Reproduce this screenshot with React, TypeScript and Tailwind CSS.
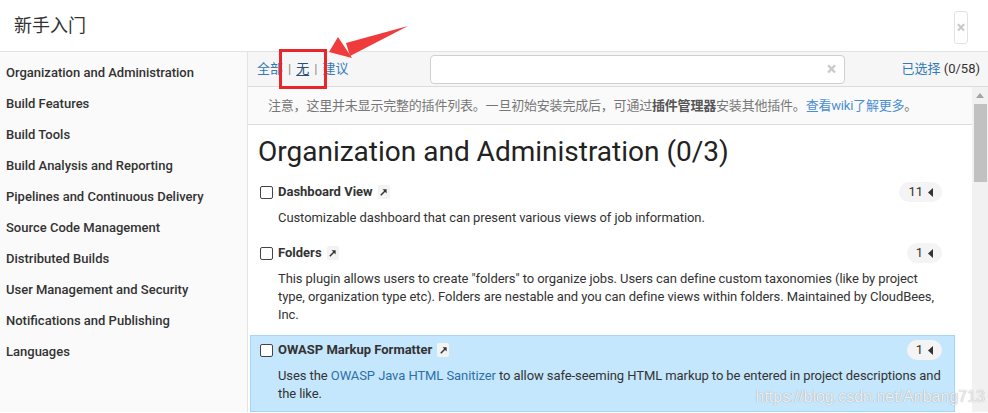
const categories = [
  "Organization and Administration",
  "Build Features",
  "Build Tools",
  "Build Analysis and Reporting",
  "Pipelines and Continuous Delivery",
  "Source Code Management",
  "Distributed Builds",
  "User Management and Security",
  "Notifications and Publishing",
  "Languages",
];

function ExtLink() {
  return (
    <span className="ml-[5px] inline-flex h-[14px] w-[12px] items-center justify-center rounded-[2px] bg-[#f3f3f3]">
      <svg width="9" height="9" viewBox="0 0 10 10">
        <path d="M2 8 L7.5 2.5" stroke="#333" strokeWidth="1.6" />
        <path d="M4 1.5 H8.5 V6 Z" fill="#333" />
      </svg>
    </span>
  );
}

function Badge({ n }: { n: string }) {
  return (
    <span className="flex h-[20px] items-center gap-[5px] rounded-full bg-[#f4f4f4] px-[9px] text-[13px] text-[#333]">
      {n}
      <svg width="5" height="9" viewBox="0 0 5 9">
        <path d="M5 0 V9 L0 4.5 Z" fill="#333" />
      </svg>
    </span>
  );
}

function Plugin({
  name,
  count,
  active,
  children,
}: {
  name: string;
  count: string;
  active?: boolean;
  children: React.ReactNode;
}) {
  return (
    <div
      className={
        "mt-[2px] border pt-[5px] pb-[8px] pl-[9px] pr-[12px] " +
        (active ? "border-[#a3d6f7] bg-[#c5e7fd]" : "border-transparent")
      }
    >
      <div className="flex h-[18px] items-center">
        <span className="h-[13px] w-[13px] rounded-[2px] border border-[#444] bg-white" />
        <span className="ml-[5px] text-[13px] font-bold text-[#333]">{name}</span>
        <ExtLink />
        <span className="ml-auto">
          <Badge n={count} />
        </span>
      </div>
      <div className="mt-[8px] -mr-[8px] pl-[18px] text-[13px] leading-[18px] tracking-[-0.08px] text-[#333]">{children}</div>
    </div>
  );
}

export default function App() {
  return (
    <div className="relative h-[413px] w-[988px] overflow-hidden bg-white font-['Roboto','Noto_Sans_CJK_SC',sans-serif] text-[#333]">
      <div className="flex h-[52px] items-center justify-between border-b border-[#e3e3e3] pl-[14px] pr-[20px]">
        <span className="text-[18px] text-[#333]">新手入门</span>
        <span className="mt-[4px] flex h-[33px] w-[14px] items-center justify-center rounded-[3px] border border-[#e2e2e2] text-[16px] font-bold text-[#c8c8c8]">
          ×
        </span>
      </div>

      <div className="flex h-[360px]">
        <div className="w-[248px] shrink-0 border-r border-[#e3e3e3] bg-[#fafafa] pt-[5px]">
          {categories.map((c) => (
            <div key={c} className="flex h-[31px] items-center pl-[6px] text-[13px] font-medium text-[#333]">
              {c}
            </div>
          ))}
        </div>

        <div className="flex min-w-0 flex-1 flex-col">
          <div className="flex h-[35px] shrink-0 items-center border-b border-[#dcdcdc] bg-[#f6f6f6] pl-[9px] pr-[8px] text-[13px]">
            <span className="text-[#337ab7]">全部</span>
            <span className="mx-[5px] text-[#888]">|</span>
            <span className="text-[#23527c] underline underline-offset-2">无</span>
            <span className="mx-[5px] text-[#888]">|</span>
            <span className="text-[#337ab7]">建议</span>
            <div className="ml-[82px] flex h-[29px] w-[415px] items-center justify-end rounded-[4px] border border-[#d0d0d0] bg-white pr-[8px]">
              <span className="text-[18px] font-bold leading-none text-[#c9c9c9]">×</span>
            </div>
            <span className="ml-auto text-[#337ab7]">
              已选择 <span className="text-[#333]">(0/58)</span>
            </span>
          </div>

          <div className="flex min-h-0 flex-1">
            <div className="min-w-0 flex-1 overflow-hidden">
              <div className="flex h-[38px] items-center border-b border-[#dcdcdc] bg-[#fafafa] pl-[20px] text-[13px] tracking-[-0.2px] text-[#777]">
                注意，这里并未显示完整的插件列表。一旦初始安装完成后，可通过
                <span className="font-bold text-[#555]">插件管理器</span>
                安装其他插件。
                <span className="text-[#4a8fd0]">查看wiki了解更多</span>。
              </div>
              <h1 className="mt-[12px] h-[30px] pl-[10px] text-[28px] leading-[30px] font-normal text-[#222]">
                Organization and Administration (0/3)
              </h1>
              <div className="mt-[10px] pl-[2px] pr-[17px]">
                <Plugin name="Dashboard View" count="11">
                  Customizable dashboard that can present various views of job information.
                </Plugin>
                <Plugin name="Folders" count="1">
                  This plugin allows users to create "folders" to organize jobs. Users can define custom taxonomies (like by project
                  <br />
                  type, organization type etc). Folders are nestable and you can define views within folders. Maintained by CloudBees,
                  <br />
                  Inc.
                </Plugin>
                <Plugin name="OWASP Markup Formatter" count="1" active>
                  Uses the <span className="text-[#2f6fa8]">OWASP Java HTML Sanitizer</span> to allow safe-seeming HTML markup to be
                  entered in project descriptions and
                  <br />
                  the like.
                </Plugin>
              </div>
            </div>
            <div className="flex w-[16px] shrink-0 flex-col items-center bg-[#f1f1f1]">
              <svg className="mt-[6px]" width="8" height="5" viewBox="0 0 8 5">
                <path d="M0 5 L4 0 L8 5 Z" fill="#a3a3a3" />
              </svg>
              <div className="mt-[6px] h-[78px] w-[13px] bg-[#c1c1c1]" />
            </div>
          </div>
        </div>
      </div>

      <div className="absolute left-[279px] top-[49px] h-[40px] w-[48px] border-[3px] border-[#e8262b]" />
      <svg className="absolute left-0 top-0" width="988" height="413" viewBox="0 0 988 413">
        <path d="M408 26 L346 43 L350 56 Z" fill="#ef3b3b" />
        <path d="M329 52 L338 37 L352 58 Z" fill="#ef3b3b" />
      </svg>
      <div className="absolute bottom-[4px] right-[3px] font-['Liberation_Sans',sans-serif] text-[16px] text-[rgba(255,255,255,0.85)] [text-shadow:0_0_1px_#8a8a8a]">
        https://blog.csdn.net/Anbang713
      </div>
    </div>
  );
}
